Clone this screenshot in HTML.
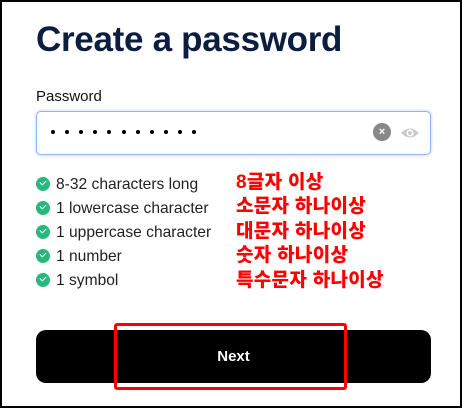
<!DOCTYPE html>
<html><head><meta charset="utf-8"><style>
html,body{margin:0;padding:0}
body{width:462px;height:408px;position:relative;background:#fff;font-family:"Liberation Sans",sans-serif;overflow:hidden}
.frame{position:absolute;left:0;top:0;width:458px;height:404px;border:2px solid #000}
h1{position:absolute;left:36px;top:20px;margin:0;font-size:35px;font-weight:bold;color:#0b1d40;letter-spacing:-0.3px}
.lbl{position:absolute;left:36px;top:88px;font-size:15px;color:#111}
.inp{position:absolute;left:36px;top:111px;width:393px;height:42px;border:1.5px solid #8fb5f5;border-radius:5px;box-shadow:0 0 0 1.5px #e3edfd}
.dot{position:absolute;top:130px;width:4px;height:4px;border-radius:50%;background:#000}
.clr{position:absolute;left:373px;top:123px;width:18px;height:18px;border-radius:50%;background:#888;color:#fff;font-size:11px;font-weight:bold;text-align:center;line-height:18px}
.li{position:absolute;left:36px;font-size:15.6px;color:#222;height:20px;line-height:20px}
.li i{display:inline-block;width:14px;height:14px;border-radius:50%;background:#27b97c;vertical-align:-2px;margin-right:6px;position:relative}
.li i:after{content:"";position:absolute;left:4px;top:3px;width:5px;height:3px;border-left:1.5px solid #fff;border-bottom:1.5px solid #fff;transform:rotate(-45deg)}
.ko{position:absolute;left:236px;font-family:"Liberation Sans","Noto Sans CJK KR",sans-serif;font-weight:900;font-size:19px;color:#f00;line-height:22px;letter-spacing:0.3px}
.btn{position:absolute;left:36px;top:330px;width:395px;height:53px;border-radius:10px;background:#000;color:#fff;font-weight:bold;font-size:15px;text-align:center;line-height:53px}
.red{position:absolute;left:114px;top:323px;width:227px;height:61px;border:3px solid #f00;border-radius:3px}
</style></head><body>
<div class="frame"></div>
<h1>Create a password</h1>
<div class="lbl">Password</div>
<div class="inp"></div>
<div class="dot" style="left:51px"></div><div class="dot" style="left:65px"></div><div class="dot" style="left:79px"></div><div class="dot" style="left:93px"></div><div class="dot" style="left:107px"></div><div class="dot" style="left:122px"></div><div class="dot" style="left:136px"></div><div class="dot" style="left:150px"></div><div class="dot" style="left:164px"></div><div class="dot" style="left:178px"></div><div class="dot" style="left:192px"></div>
<div class="clr">×</div>
<svg style="position:absolute;left:400px;top:125px" width="20" height="16" viewBox="0 0 20 16"><path d="M1 8 Q10 -1 19 8 Q10 17 1 8Z" fill="#ccc"/><circle cx="10" cy="8" r="3.5" fill="#fff"/><circle cx="10" cy="8" r="2" fill="#ccc"/></svg>
<div class="li" style="top:175px"><i></i>8-32 characters long</div>
<div class="li" style="top:199px"><i></i>1 lowercase character</div>
<div class="li" style="top:223px"><i></i>1 uppercase character</div>
<div class="li" style="top:247px"><i></i>1 number</div>
<div class="li" style="top:271px"><i></i>1 symbol</div>
<div class="ko" style="top:172px">8글자 이상</div>
<div class="ko" style="top:196px">소문자 하나이상</div>
<div class="ko" style="top:221px">대문자 하나이상</div>
<div class="ko" style="top:245px">숫자 하나이상</div>
<div class="ko" style="top:270px">특수문자 하나이상</div>
<div class="btn">Next</div>
<div class="red"></div>
</body></html>
